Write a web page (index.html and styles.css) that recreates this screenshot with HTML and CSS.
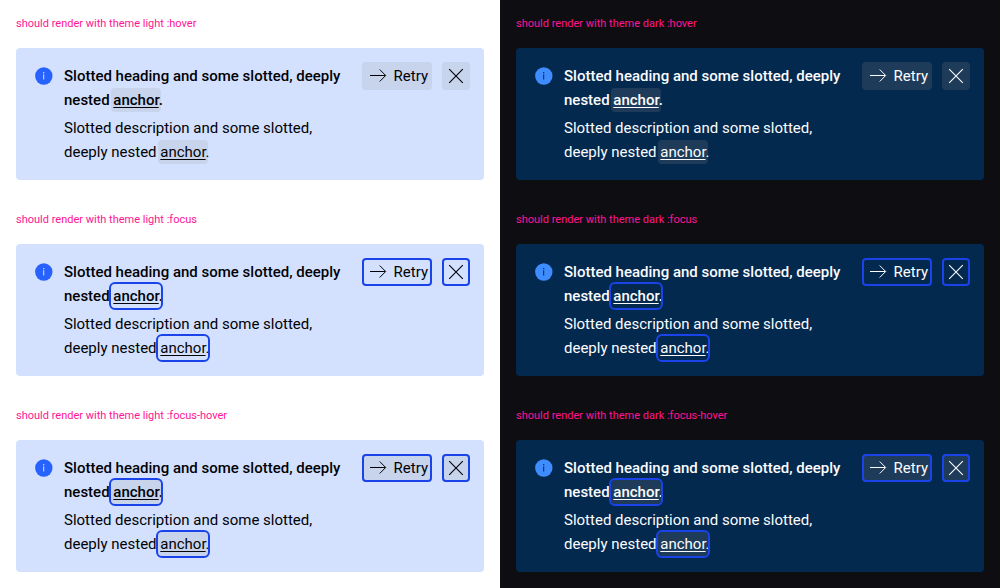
FILE: index.html
```html
<!DOCTYPE html>
<html lang="en">
<head>
<meta charset="utf-8">
<title>Inline notification states</title>
<link rel="stylesheet" href="styles.css">
</head>
<body>
<svg class="sprite" aria-hidden="true">
  <symbol id="info" viewBox="0 0 24 24">
    <circle class="disc" cx="11.8" cy="12" r="8.7"/>
    <path class="mark" d="M11.2 10.3h1v5.2h-1zM11.1 8.1h1.2v1.2h-1.2z"/>
  </symbol>
  <symbol id="arrow" viewBox="0 0 24 24">
    <path d="M4 11.5h15.3M13.7 5.5l6 6-6 6" fill="none" stroke="currentColor"/>
  </symbol>
  <symbol id="close" viewBox="0 0 24 24">
    <path d="M5.2 5.2l13.6 13.6M18.8 5.2L5.2 18.8" fill="none" stroke="currentColor" stroke-width="1.1"/>
  </symbol>
</svg>
<main class="states"></main>
<template id="state">
  <section class="state">
    <h2 class="label"></h2>
    <div class="notification">
      <svg class="icon"><use href="#info"/></svg>
      <div class="content">
        <h3 class="heading">Slotted heading and some slotted, deeply nested <a class="anchor" href="#">anchor</a>.</h3>
        <p class="description">Slotted description and some slotted, deeply nested <a class="anchor" href="#">anchor</a>.</p>
      </div>
      <button class="button retry" type="button"><svg class="icon"><use href="#arrow"/></svg><span>Retry</span></button>
      <button class="button close" type="button" aria-label="Close"><svg class="icon"><use href="#close"/></svg></button>
    </div>
  </section>
</template>
<script src="script.js"></script>
</body>
</html>
```
FILE: styles.css
```css
* {
  box-sizing: border-box;
}

body {
  margin: 0;
  font: 15px/24px Roboto, "Liberation Sans", sans-serif;
}

.sprite {
  position: absolute;
  width: 0;
  height: 0;
}

.states {
  display: grid;
  grid-template-columns: 1fr 1fr;
}

.state {
  padding: 16px;
}

.light {
  --page: #fff;
  --surface: #d3e1ff;
  --text: #010205;
  --info: #2762ff;
  background: var(--page);
}

.dark {
  --page: #0e0e12;
  --surface: #04294e;
  --text: #fbfcff;
  --info: #3f8cff;
  background: var(--page);
}

.label {
  margin: 0 0 16px;
  color: #ff1493;
  font-size: 11px;
  font-weight: 400;
  line-height: 16px;
}

.notification {
  display: flex;
  align-items: flex-start;
  gap: 16px;
  padding: 16px;
  border-radius: 4px;
  background: var(--surface);
  color: var(--text);
}

.icon {
  flex: none;
  width: 24px;
  height: 24px;
}

.disc {
  fill: var(--info);
}

.mark {
  fill: var(--surface);
}

.content {
  flex: 1;
  margin-left: -8px;
}

.heading {
  margin: 0 0 4px;
  font-size: 15px;
  font-weight: 500;
}

.description {
  margin: 0;
}

.anchor {
  padding: 1px 0;
  border-radius: 2px;
  color: inherit;
  text-decoration: underline;
  text-underline-offset: 2px;
}

.button {
  display: flex;
  flex: none;
  gap: 4px;
  margin: -2px;
  padding: 2px;
  border: 0;
  border-radius: 4px;
  background: none;
  color: inherit;
  font: inherit;
}

.retry {
  margin: -2px -4px;
  padding: 2px 4px;
}

.close {
  margin: -2px;
}

.hovered .anchor,
.hovered .button {
  background: rgba(148, 149, 152, 0.18);
}

.hovered .anchor {
  box-shadow: 0 0 0 2px rgba(148, 149, 152, 0.18);
}

.focused .anchor {
  outline: 2px solid #1a44ea;
  outline-offset: 2px;
}

.focused .button {
  outline: 2px solid #1a44ea;
  outline-offset: -2px;
}
```
FILE: script.js
```javascript
const main = document.querySelector('.states');
const template = document.getElementById('state');

for (const state of ['hover', 'focus', 'focus-hover']) {
  for (const theme of ['light', 'dark']) {
    const section = template.content.cloneNode(true).firstElementChild;
    section.classList.add(theme);
    section.classList.toggle('hovered', state.includes('hover'));
    section.classList.toggle('focused', state.includes('focus'));
    section.querySelector('.label').textContent = `should render with theme ${theme} :${state}`;
    main.append(section);
  }
}
```
